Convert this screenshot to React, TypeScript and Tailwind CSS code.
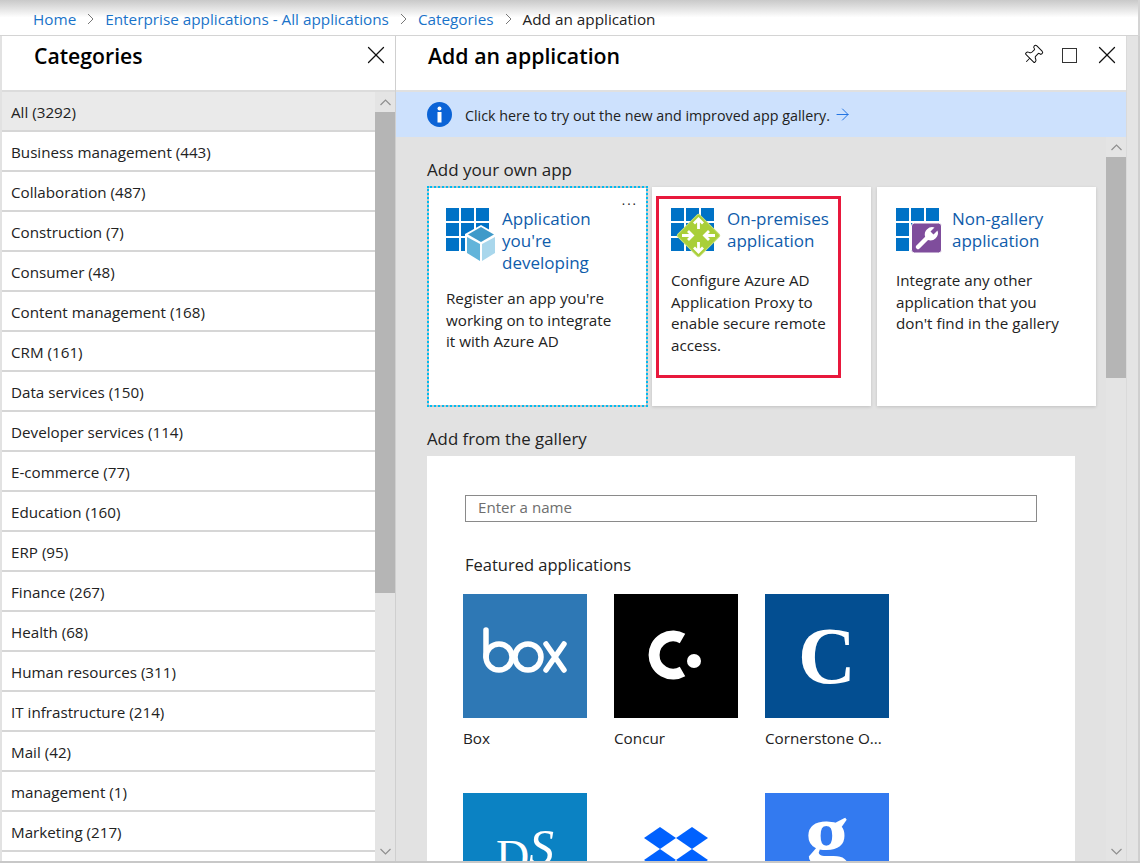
import React from 'react';
import { X, Pin, ArrowRight } from 'lucide-react';

const categories = [
  'All (3292)', 'Business management (443)', 'Collaboration (487)', 'Construction (7)', 'Consumer (48)',
  'Content management (168)', 'CRM (161)', 'Data services (150)', 'Developer services (114)', 'E-commerce (77)',
  'Education (160)', 'ERP (95)', 'Finance (267)', 'Health (68)', 'Human resources (311)',
  'IT infrastructure (214)', 'Mail (42)', 'management (1)', 'Marketing (217)', 'Media (52)',
];

const Chevron: React.FC<{ up?: boolean }> = ({ up }) => (
  <div className="h-5 flex items-center justify-center">
    <svg width="11" height="7" viewBox="0 0 11 7" fill="none" stroke="#8f8f8f" strokeWidth="1.2">
      <path d={up ? 'M0.5 6L5.5 1L10.5 6' : 'M0.5 1L5.5 6L10.5 1'} />
    </svg>
  </div>
);

const Scrollbar: React.FC<{ thumbClass: string }> = ({ thumbClass }) => (
  <div className="w-5 shrink-0 flex flex-col bg-[#e4e4e4]">
    <Chevron up />
    <div className={`bg-[#b5b5b5] ${thumbClass}`} />
    <div className="flex-1" />
    <Chevron />
  </div>
);

const Grid = () => (
  <g fill="#0072c6">
    {[0, 15, 30].map(y => [0, 15, 30].map(x => <rect key={`${x}-${y}`} x={x} y={y} width="13" height="13" />))}
  </g>
);

const DevIcon = () => (
  <svg width="56" height="56" viewBox="0 0 56 56" className="shrink-0 -mb-3">
    <Grid />
    <path d="M35 17L51 26V46L35 55L19 46V26Z" fill="#fff" />
    <path d="M35 19L48 26.5L35 34L22 26.5Z" fill="#3f9ac9" />
    <path d="M21 29L34 36V53L21 45Z" fill="#62b4da" />
    <path d="M36 36L49 29V45L36 53Z" fill="#a9d7ec" />
  </svg>
);

const ProxyIcon = () => (
  <svg width="56" height="56" viewBox="0 0 56 56" className="shrink-0 -mb-3">
    <Grid />
    <rect x="12" y="12" width="31" height="31" rx="2" transform="rotate(45 27.5 27.5)" fill="#a9cf38" stroke="#c6df7d" />
    <g stroke="#fff" strokeWidth="2.8" fill="none">
      <path d="M27.5 11V21M23 15.5L27.5 11L32 15.5" />
      <path d="M27.5 44V34M23 39.5L27.5 44L32 39.5" />
      <path d="M11 27.5H21M17 23L21.5 27.5L17 32" />
      <path d="M44 27.5H34M38 23L33.5 27.5L38 32" />
    </g>
  </svg>
);

const WrenchIcon = () => (
  <svg width="56" height="56" viewBox="0 0 56 56" className="shrink-0 -mb-3">
    <Grid />
    <rect x="15.5" y="15" width="30" height="30" rx="3" fill="#7f4d9c" stroke="#fff" />
    <path d="M22 39L32 29" stroke="#fff" strokeWidth="4.5" strokeLinecap="round" />
    <path d="M29 28.5A7.5 7.5 0 0 1 38.5 19.5L34.5 23.5L37.5 26.5L41.5 22.5A7.5 7.5 0 0 1 32 32Z" fill="#fff" />
  </svg>
);

const CardBody: React.FC<{ icon: React.ReactNode; title: string[]; desc: string[]; gap: string }> = ({ icon, title, desc, gap }) => (
  <div>
    <div className="flex items-start">
      {icon}
      <div className="text-[17px] leading-[22px] text-[#0f5cab]">
        {title.map(t => <div key={t}>{t}</div>)}
      </div>
    </div>
    <div className={`text-[15.2px] leading-[21.5px] text-[#222] ${gap}`}>
      {desc.map(t => <div key={t} className="whitespace-nowrap">{t}</div>)}
    </div>
  </div>
);

const Tile: React.FC<{ bg: string; label?: string; children: React.ReactNode }> = ({ bg, label, children }) => (
  <div className="w-[124px] h-[199px] shrink-0">
    <div className={`w-[124px] h-[124px] flex justify-center overflow-hidden ${bg}`}>{children}</div>
    {label && <div className="mt-[9px] text-[15.25px] leading-[22px] text-[#222] whitespace-nowrap">{label}</div>}
  </div>
);

function Sep() {
  return (
    <svg width="7" height="12" viewBox="0 0 7 12" fill="none" stroke="#777" strokeWidth="1">
      <path d="M1 1L6 6L1 11" />
    </svg>
  );
}

export default function App() {
  return (
    <div className="w-[1140px] h-[863px] overflow-hidden flex flex-col bg-white border-b-2 border-[#c8c8c8] font-['Open_Sans','Noto_Sans',sans-serif] text-[#222]">
      <div className="h-9 shrink-0 flex items-center pl-[33px] gap-[11px] border-b border-r-2 border-[#d4d4d4] bg-gradient-to-b from-[#c9c9c9] via-white via-50% to-white pt-[3px] text-[15.3px]">
        <span className="text-[#1a73c9]">Home</span>
        <Sep />
        <span className="text-[#1a73c9]">Enterprise applications - All applications</span>
        <Sep />
        <span className="text-[#1a73c9]">Categories</span>
        <Sep />
        <span>Add an application</span>
      </div>

      <div className="flex-1 min-h-0 flex border-l-2 border-[#e2e2e2]">
        <div className="w-[394px] shrink-0 flex flex-col border-r border-[#cfcfcf]">
          <div className="h-14 shrink-0 flex justify-between pl-8 pr-[4px] pt-[4px] border-b-2 border-[#dcdcdc]">
            <span className="text-[21.2px] leading-8 font-semibold text-black">Categories</span>
            <X size={30} strokeWidth={1} className="text-[#111]" />
          </div>
          <div className="flex-1 min-h-0 flex">
            <div className="flex-1 min-w-0 overflow-hidden">
              {categories.map((c, i) => (
                <div key={c} className={`h-10 flex items-center pl-[9px] pt-[2px] border-b-2 border-[#d6d6d6] text-[15.2px] ${i === 0 ? 'bg-[#eaeaea]' : ''}`}>{c}</div>
              ))}
            </div>
            <Scrollbar thumbClass="h-[481px]" />
          </div>
        </div>

        <div className="flex-1 min-w-0 flex">
          <div className="w-[730px] shrink-0 flex flex-col">
            <div className="h-14 shrink-0 flex justify-between pl-8 pr-[4px] pt-[4px] border-b-2 border-[#e0e0e0]">
              <span className="text-[21.3px] leading-8 font-semibold text-black">Add an application</span>
              <div className="h-[30px] flex items-center text-[#111]">
                <Pin size={22} strokeWidth={1.1} className="rotate-45" />
                <div className="w-[15px] h-[15px] ml-[18px] mr-[15px] border border-[#333]" />
                <X size={30} strokeWidth={1} />
              </div>
            </div>
            <div className="h-[45px] shrink-0 flex items-center pl-[31px] bg-[#cde1fd] text-[14.3px]">
              <svg width="25" height="25" viewBox="0 0 25 25" className="shrink-0 mr-[13px]">
                <circle cx="12.5" cy="12.5" r="12.5" fill="#0b63d6" />
                <circle cx="12.5" cy="6.5" r="2" fill="#fff" />
                <rect x="10.5" y="10" width="4" height="10.5" fill="#fff" />
              </svg>
              <span className="pt-[2px]">Click here to try out the new and improved app gallery.</span>
              <ArrowRight size={19} strokeWidth={1.2} className="ml-[3px] text-[#1a6fe0]" />
            </div>
            <div className="flex-1 min-h-0 flex bg-[#e2e2e2]">
              <div className="flex-1 min-w-0 overflow-hidden pl-[31px] pt-[21px]">
                <div className="text-[17px] leading-6">Add your own app</div>
                <div className="mt-[4px] flex items-start">
                  <div className="w-[221px] h-[221px] shrink-0 border-2 border-dotted border-[#00bcf2] bg-[#c4c4c4]">
                    <div className="relative h-full bg-white pl-[17px] pt-[20px]">
                      <span className="absolute right-[8px] top-[6px] text-[13px] leading-3 tracking-[2px]">...</span>
                      <CardBody icon={<DevIcon />} title={['Application', "you're", 'developing']} desc={["Register an app you're", 'working on to integrate', 'it with Azure AD']} gap="mt-[14px]" />
                    </div>
                  </div>
                  <div className="relative ml-1 mt-px w-[219px] h-[219px] shrink-0 bg-white pl-[19px] pt-[21px] shadow-[0_1px_3px_rgba(0,0,0,0.15)]">
                    <div className="absolute left-1 top-[9px] w-[185px] h-[182px] border-[3px] border-[#e8183c]" />
                    <CardBody icon={<ProxyIcon />} title={['On-premises', 'application']} desc={['Configure Azure AD', 'Application Proxy to', 'enable secure remote', 'access.']} gap="mt-[18px]" />
                  </div>
                  <div className="ml-[6px] mt-px w-[219px] h-[219px] shrink-0 bg-white pl-[19px] pt-[21px] shadow-[0_1px_3px_rgba(0,0,0,0.15)]">
                    <CardBody icon={<WrenchIcon />} title={['Non-gallery', 'application']} desc={['Integrate any other', 'application that you', "don't find in the gallery"]} gap="mt-[18px]" />
                  </div>
                </div>
                <div className="mt-5 text-[16.8px] leading-6">Add from the gallery</div>
                <div className="mt-[5px] w-[648px] h-[500px] bg-white pl-9 pt-[39px]">
                  <div className="ml-0.5 w-[572px] h-[27px] flex items-center pl-3 pb-0.5 border border-[#8a8a8a] text-[15.1px] text-[#6e6e6e]">Enter a name</div>
                  <div className="ml-0.5 mt-[31px] text-[16.5px] leading-6">Featured applications</div>
                  <div className="mt-[17px] grid grid-cols-[124px_124px_124px] gap-x-[27px]">
                    <Tile bg="bg-[#2e78b5] items-start" label="Box">
                      <svg width="84" height="48" viewBox="0 0 84 48" fill="none" stroke="#fff" strokeWidth="5.5" strokeLinecap="round" className="mt-[33px]">
                        <path d="M3 3V30" />
                        <circle cx="16" cy="30" r="13" />
                        <circle cx="45" cy="30" r="13" />
                        <path d="M63 17L81 43M81 17L63 43" />
                      </svg>
                    </Tile>
                    <Tile bg="bg-black" label="Concur">
                      <svg width="124" height="124" viewBox="0 0 124 124" fill="none">
                        <path d="M68.5 44.5A19 19 0 1 0 68.5 77.5" stroke="#fff" strokeWidth="11" />
                        <circle cx="80" cy="67" r="7" fill="#fff" />
                      </svg>
                    </Tile>
                    <Tile bg="bg-[#034e91] items-center" label="Cornerstone O...">
                      <span className="font-['Liberation_Serif',serif] font-bold text-[80px] leading-none text-white">C</span>
                    </Tile>
                    <Tile bg="bg-[#0b82c3] items-start">
                      <span className="mt-[41px] font-['Liberation_Serif',serif] text-[46px] leading-none text-white">D</span>
                      <span className="mt-[29px] font-['Liberation_Serif',serif] text-[50px] leading-none text-white italic">S</span>
                    </Tile>
                    <Tile bg="bg-white items-start">
                      <svg width="64" height="70" viewBox="0 0 64 70" fill="#0061fe" className="mt-[34px]">
                        <path d="M16 0L32 11L16 22L0 11Z" />
                        <path d="M48 0L64 11L48 22L32 11Z" />
                        <path d="M16 22L32 33L16 44L0 33Z" />
                        <path d="M48 22L64 33L48 44L32 33Z" />
                      </svg>
                    </Tile>
                    <Tile bg="bg-[#337af0] items-start">
                      <span className="-mt-0.5 font-['Liberation_Serif',serif] font-bold text-[88px] leading-none text-white">g</span>
                    </Tile>
                  </div>
                </div>
              </div>
              <Scrollbar thumbClass="h-[221px]" />
            </div>
          </div>
          <div className="flex-1 bg-[#e4e4e4] border-l border-[#dadada] border-r-2 border-r-[#cfcfcf]" />
        </div>
      </div>
    </div>
  );
}
